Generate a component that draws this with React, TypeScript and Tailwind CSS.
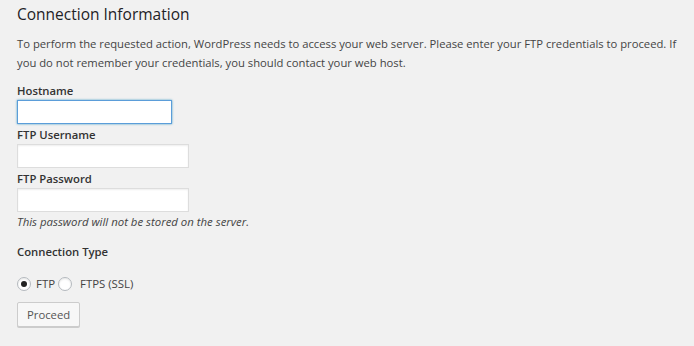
import React from "react";

function Field({ label, focused, width }: { label: string; focused?: boolean; width: string }) {
  return (
    <div className="flex flex-col">
      <label className="text-[11.3px] font-semibold leading-[16px] text-[#333]">{label}</label>
      <input
        type="text"
        className={`mt-[1px] h-[24px] ${width} rounded-none bg-white outline-none ${
          focused
            ? "border border-[#5b9dd9] shadow-[0_0_2px_rgba(30,140,190,0.8)]"
            : "border border-[#ddd] shadow-[inset_0_1px_2px_rgba(0,0,0,0.07)]"
        }`}
      />
    </div>
  );
}

function Radio({ checked, label, gap }: { checked?: boolean; label: string; gap: string }) {
  return (
    <label className="flex items-center">
      <span className="flex h-[14px] w-[14px] items-center justify-center rounded-full border border-[#b4b9be] bg-white shadow-[inset_0_1px_2px_rgba(0,0,0,0.1)]">
        {checked && <span className="h-[6px] w-[6px] rounded-full bg-[#222]" />}
      </span>
      <span className={`${gap} text-[11.4px] text-[#444]`}>{label}</span>
    </label>
  );
}

export default function App() {
  return (
    <div
      className="h-[346px] w-[694px] bg-[#f1f1f1] px-[17px] pt-[4px] text-[#444]"
      style={{ fontFamily: '"Open Sans", sans-serif' }}
    >
      <h2 className="text-[15.5px] leading-[20px] text-[#1e2226]">Connection Information</h2>
      <p className="mt-[10px] text-[11.25px] leading-[19px] text-[#444]">
        To perform the requested action, WordPress needs to access your web server. Please enter your FTP credentials to proceed. If
        you do not remember your credentials, you should contact your web host.
      </p>
      <div className="mt-[11px] flex flex-col gap-[3px]">
        <Field label="Hostname" focused width="w-[155px]" />
        <Field label="FTP Username" width="w-[172px]" />
        <Field label="FTP Password" width="w-[172px]" />
      </div>
      <p className="mt-[2px] text-[11.4px] italic leading-[16px] text-[#444]">This password will not be stored on the server.</p>
      <div className="mt-[14px] text-[11.3px] font-semibold leading-[16px] text-[#333]">Connection Type</div>
      <div className="mt-[15px] flex items-center gap-[3px]">
        <Radio checked label="FTP" gap="ml-[5px]" />
        <Radio label="FTPS (SSL)" gap="ml-[8px]" />
      </div>
      <button className="mt-[10px] h-[25px] rounded-[2px] border border-[#ccc] bg-[#f7f7f7] px-[9px] text-[11.3px] leading-[22px] text-[#555] shadow-[0_1px_0_#ccc]">
        Proceed
      </button>
    </div>
  );
}
